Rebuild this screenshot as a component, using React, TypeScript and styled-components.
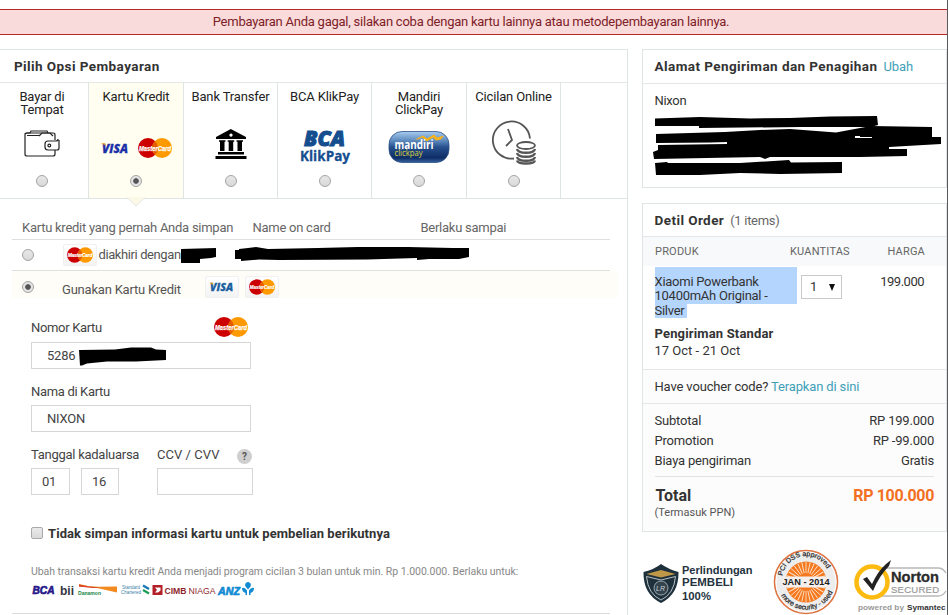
import React from "react";
import styled, { createGlobalStyle, css } from "styled-components";

const Global = createGlobalStyle`
  * { box-sizing: border-box; }
  html, body { margin: 0; padding: 0; background: #fff; overflow: hidden; }
  body { font-family: Roboto, "Liberation Sans", sans-serif; font-size: 13px; line-height: 16px; color: #333; }
  svg { display: block; flex: none; overflow: visible; }
`;

const Page = styled.div`
  width: 948px;
  height: 615px;
  overflow: hidden;
  padding-top: 9px;
  border-right: 1px solid #58595b;
  display: flex;
  flex-direction: column;
`;

const Alert = styled.div`
  height: 26px;
  flex: none;
  border: 1px solid #b52b2b;
  border-width: 1px 0;
  background: #fadbdb;
  color: #7d2127;
  text-align: center;
  line-height: 24px;
  padding-right: 5px;
  letter-spacing: -0.24px;
`;

const Columns = styled.div`
  display: flex;
  gap: 14px;
  margin-top: 14px;
  height: 566px;
`;

const Payment = styled.section`
  width: 628px;
  flex: none;
  border: 1px solid #dfe4e4;
  border-width: 1px 1px 0 0;
`;

const Side = styled.aside`
  width: 305px;
  flex: none;
`;

const PanelTitle = styled.h2<{ $h: number; $left: number }>`
  margin: 0;
  height: ${(p) => p.$h}px;
  padding-left: ${(p) => p.$left}px;
  border-bottom: 1px solid #e3e7e7;
  font-size: 13.5px;
  font-weight: 700;
  line-height: 33px;
  letter-spacing: 0.42px;
  display: flex;
  gap: 6px;
`;

const TitleNote = styled.span<{ $link?: boolean }>`
  font-size: 13px;
  font-weight: 400;
  letter-spacing: ${(p) => (p.$link ? -0.1 : -0.3)}px;
  color: ${(p) => (p.$link ? "#3f9fb8" : "#666")};
`;

const Tabs = styled.div`
  display: grid;
  grid-template-columns: 89px 95px 94px 94px 95px 94px 1fr;
  height: 116px;
  border-bottom: 1px solid #dfe5e5;
`;

const Tab = styled.div<{ $active?: boolean; $first?: boolean }>`
  position: relative;
  border-right: 1px solid #dfe5e5;
  background: ${(p) => (p.$active ? "#fffef0" : "#fff")};
  display: flex;
  flex-direction: column;
  align-items: center;
  ${(p) => (p.$first ? css`padding: 7px 4px 0 0;` : css`padding-top: 7px;`)}
`;

const TabName = styled.div`
  height: 32px;
  text-align: center;
  line-height: 13px;
  white-space: pre;
  color: #222;
  letter-spacing: -0.15px;
`;

const TabIcon = styled.div<{ $lift: number }>`
  height: 53px;
  padding-bottom: ${(p) => p.$lift * 2}px;
  display: flex;
  align-items: center;
  justify-content: center;
`;

const Notch = styled.svg`
  position: absolute;
  left: 38px;
  bottom: -9px;
`;

const Radio = styled.span<{ $on?: boolean }>`
  width: 12px;
  height: 12px;
  flex: none;
  border-radius: 50%;
  border: 1px solid #a4a4a4;
  background: ${(p) =>
    p.$on
      ? "radial-gradient(circle, #555 0 2.4px, #e4e4e4 3.2px)"
      : "linear-gradient(#e8e8e8, #d8d8d8)"};
`;

const Saved = styled.div`
  margin-left: 12px;
  width: 598px;
  color: #666;
`;

const SavedHead = styled.div`
  height: 41px;
  padding: 21px 0 0 10px;
  border-bottom: 1px solid #dfdfdf;
  display: grid;
  grid-template-columns: 230.5px 168px 1fr;
  letter-spacing: -0.26px;
`;

const SavedRow = styled.div`
  height: 31px;
  border-bottom: 1px solid #dfdfdf;
  display: flex;
  align-items: center;
  padding-left: 10px;
  color: #555;
  letter-spacing: -0.4px;
`;

const NewCardRow = styled.div`
  width: 606px;
  margin-left: 12px;
  height: 27px;
  background: #fffdf8;
  display: flex;
  align-items: flex-start;
  padding: 5px 0 0 10px;
  color: #555;
`;

const RadioSlot = styled.span`
  padding-top: 5px;
`;

const NewCardName = styled.span`
  margin: 6px 24px 0 28px;
  width: 118.5px;
  white-space: nowrap;
  letter-spacing: -0.21px;
`;

const CardChip = styled.span`
  width: 34px;
  height: 22px;
  flex: none;
  border: 1px solid #f0f0f0;
  border-radius: 2px;
  background: linear-gradient(#fff, #f3f3f3);
  display: flex;
  align-items: center;
  justify-content: center;
  & + & { margin-left: 6px; }
`;

const Form = styled.form`
  padding: 19px 0 0 31px;
  color: #444;
`;

const NumberTop = styled.div`
  width: 217px;
  height: 20px;
  margin-bottom: 5px;
  display: flex;
  justify-content: space-between;
  align-items: center;
`;

const FieldLabel = styled.div`
  letter-spacing: -0.33px;
  padding-top: 1px;
`;

const NameTop = styled.div`
  height: 36px;
  padding-top: 14px;
`;

const Field = styled.div<{ $w: number; $pad: number }>`
  width: ${(p) => p.$w}px;
  height: 27px;
  border: 1px solid #d6d6d6;
  padding-left: ${(p) => p.$pad}px;
  display: flex;
  align-items: center;
  letter-spacing: -0.2px;
`;

const ExpiryLabels = styled.div`
  display: flex;
  height: 16px;
  margin-top: 15px;
`;

const ExpiryLabel = styled.span<{ $w: number; $ls: number }>`
  width: ${(p) => p.$w}px;
  letter-spacing: ${(p) => p.$ls}px;
  white-space: nowrap;
`;

const Help = styled.span`
  width: 15px;
  height: 15px;
  margin-top: 2px;
  border-radius: 50%;
  background: #cfcfcf;
  color: #555;
  font-size: 10px;
  font-weight: 700;
  line-height: 15px;
  text-align: center;
`;

const ExpiryFields = styled.div`
  display: flex;
  margin-top: 5px;
`;

const Spacer = styled.span<{ $w: number }>`
  width: ${(p) => p.$w}px;
`;

const Remember = styled.label`
  display: flex;
  align-items: center;
  gap: 5px;
  height: 16px;
  margin-top: 31px;
  font-weight: 700;
  letter-spacing: 0.08px;
  color: #333;
`;

const Check = styled.span`
  width: 12px;
  height: 12px;
  margin-bottom: 2px;
  border: 1px solid #aaa;
  border-radius: 2px;
  background: linear-gradient(#eaeaea, #d9d9d9);
`;

const Installment = styled.p`
  margin: 22px 0 0;
  font-size: 10.5px;
  line-height: 16px;
  color: #888;
  letter-spacing: -0.04px;
  white-space: nowrap;
`;

const Logos = styled.div`
  margin-top: 2px;
`;

const BottomRule = styled.div`
  margin: 17px 0 0 12px;
  width: 598px;
  height: 1px;
  background: #dcdcdc;
`;

const AddressPanel = styled.section`
  height: 139px;
  border: 1px solid #dfe4e4;
`;

const AddressBody = styled.div`
  padding: 9px 0 0 11.5px;
  letter-spacing: -0.3px;
`;

const OrderPanel = styled.section`
  height: 329px;
  margin-top: 15px;
  border: 1px solid #dfe4e4;
`;

const OrderHead = styled.div`
  height: 29px;
  background: #f7f9fa;
  padding: 0 21px 0 12px;
  display: grid;
  grid-template-columns: 135px 1fr auto;
  align-items: center;
  font-size: 11px;
  letter-spacing: 0.2px;
  color: #666;
`;

const Item = styled.div`
  height: 103px;
  padding: 1px 22px 0 11.5px;
`;

const ItemTop = styled.div`
  display: flex;
  height: 51px;
`;

const Product = styled.div`
  width: 142px;
  line-height: 14.4px;
  letter-spacing: -0.26px;
`;

const Selected = styled.div<{ $last?: boolean }>`
  background: #b4d5fe;
  ${(p) =>
    p.$last
      ? css`width: 32px; height: 14px;`
      : css`height: 37px; padding-top: 8px; white-space: pre;`}
`;

const Quantity = styled.div`
  width: 41px;
  height: 24px;
  margin: 8px 0 0 4.5px;
  border: 1px solid #c9c9c9;
  padding: 0 5px 0 8px;
  display: flex;
  align-items: center;
  justify-content: space-between;
`;

const Price = styled.div`
  margin: 7px 0 0 auto;
  letter-spacing: -0.5px;
`;

const Shipping = styled.div`
  margin-top: 7px;
  line-height: 17px;
`;

const ShippingName = styled.div`
  font-weight: 700;
  letter-spacing: 0.16px;
`;

const Voucher = styled.div`
  height: 35px;
  border: 1px solid #e3e7e7;
  border-width: 1px 0;
  background: #fcfcfc;
  padding-left: 11.5px;
  line-height: 33px;
  letter-spacing: -0.15px;
`;

const Link = styled.a`
  color: #3f9fb8;
`;

const Summary = styled.div`
  background: #fcfcfc;
  height: 127px;
  padding: 7px 12px 0 11.5px;
`;

const SumRow = styled.div`
  display: flex;
  justify-content: space-between;
  line-height: 20px;
  letter-spacing: -0.2px;
`;

const TotalRow = styled.div`
  display: flex;
  justify-content: space-between;
  border-top: 1px solid #e0e4e4;
  margin-top: 5px;
  padding: 8px 0 0 1px;
  line-height: 22px;
  font-size: 16px;
  font-weight: 700;
`;

const Amount = styled.span`
  color: #f36f21;
  letter-spacing: -0.35px;
`;

const Tax = styled.div`
  font-size: 11px;
  line-height: 12px;
  color: #555;
`;

const Badges = styled.div`
  display: flex;
  height: 70px;
  margin-top: 14px;
`;

const SealSlot = styled.div<{ $top: number; $w: number }>`
  width: ${(p) => p.$w}px;
  flex: none;
  padding-top: ${(p) => p.$top}px;
`;

const Pair = styled.span`
  display: flex;
  align-items: center;
  gap: 9px;
`;

const MasterCard = ({ w = 34, h = 20 }: { w?: number; h?: number }) => (
  <svg width={w} height={h} viewBox="0 0 34 20">
    <circle cx="10" cy="10" r="10" fill="#c00" />
    <circle cx="24" cy="10" r="10" fill="#f90" />
    <path d="M17 2.9a10 10 0 0 1 0 14.2a10 10 0 0 1 0-14.2" fill="#e65c00" />
    <text x="1" y="13" fontFamily="Liberation Sans" fontStyle="italic" fontWeight="700" fontSize="7.5" textLength="32" lengthAdjust="spacingAndGlyphs" fill="#fff" stroke="#fff" strokeWidth=".25">MasterCard</text>
  </svg>
);

const Visa = ({ w = 28, color = "#1a30a8" }: { w?: number; color?: string }) => (
  <svg width={w} height="14" viewBox="0 0 28 14">
    <text x="1" y="11.5" fontFamily="Open Sans" fontStyle="italic" fontWeight="800" fontSize="12.5" textLength="26" lengthAdjust="spacingAndGlyphs" fill={color} stroke={color} strokeWidth=".3">VISA</text>
    <path d="M0.500 2.300h3.600l.8 2.600Q3 3 .5 2.800z" fill="#f5a21b" />
  </svg>
);

const CardPair = () => <Pair><Visa /><MasterCard /></Pair>;

const Wallet = () => (
  <svg width="36" height="28" viewBox="0 0 36 28" fill="none" stroke="#222" strokeWidth="1.2">
    <path d="M31 10V5q0-2-2-2H3Q1 3 1 5v19q0 2 2 2h26q2 0 2-2v-4" />
    <path d="M1 4q0-1 2-1h3l1-2h16l1 2M15 6l3-3h8l3 3M3 5.5h12" />
    <path d="M35 10v8q0 2-2 2H24q-3 0-3-3v-3q0-3 3-3h8q2 0 2-2" />
    <circle cx="25.3" cy="15.5" r="1.4" />
  </svg>
);

const Bank = () => (
  <svg width="32" height="30" viewBox="0 0 32 30">
    <path fill="#000" fillRule="evenodd" d="M15.8 0 31 8v2H1V8zM16 4.500a1.600 1.600 0 1 0 .01 0M4 11.200h6.500v1.500H9.500V22H5v-9.300H4zM12.700 11.200h6.500v1.500h-1V22h-4.500v-9.300h-1zM21.500 11.200H28v1.500h-1V22h-4.500v-9.300h-1zM3 23h26v2.500H3zM.5 27h31v3H.5z" />
  </svg>
);

const BcaKlikPay = () => (
  <svg width="52" height="36" viewBox="0 0 52 36" fill="#144e8f">
    <text x="5" y="16.500" fontFamily="Open Sans" fontStyle="italic" fontWeight="800" fontSize="21" textLength="41" lengthAdjust="spacingAndGlyphs" stroke="#144e8f" strokeWidth="1">BCA</text>
    <text x="1" y="32" fontFamily="Open Sans" fontWeight="700" fontSize="13.5" textLength="50" lengthAdjust="spacingAndGlyphs" stroke="#144e8f" strokeWidth=".3">KlikPay</text>
  </svg>
);

const MandiriClickPay = () => (
  <svg width="62" height="34" viewBox="0 0 62 34">
    <defs>
      <linearGradient id="pill" x1="0" y1="0" x2="0" y2="1">
        <stop offset="0" stopColor="#a9cdf0" />
        <stop offset=".3" stopColor="#5b88bd" />
        <stop offset=".5" stopColor="#27518d" />
        <stop offset=".85" stopColor="#0e2d66" />
        <stop offset="1" stopColor="#36639f" />
      </linearGradient>
    </defs>
    <rect x="1" y="1.500" width="60" height="31" rx="13" fill="url(#pill)" stroke="#2c5185" strokeWidth=".8" />
    <path d="M27 9.500l8-4 4 3 7-4 3 3 7-2-3 4-5 1-3-3-6 4-5-4-4 2z" fill="#f8b319" />
    <text x="6.500" y="18.500" fontFamily="Open Sans" fontWeight="700" fontSize="11.5" textLength="39" lengthAdjust="spacingAndGlyphs" fill="#fff">mandiri</text>
    <text x="6.500" y="26" fontFamily="Open Sans" fontSize="9" textLength="28" lengthAdjust="spacingAndGlyphs" fill="#d9cf3c">clickpay</text>
  </svg>
);

const ClockCoins = () => (
  <svg width="46" height="45" viewBox="0 0 46 45" fill="none" stroke="#555" strokeWidth="1.8">
    <path d="M23 38.500A18.600 18.600 0 1 1 39 18.500" />
    <path d="M17 9l4 11-6 6" />
    <ellipse cx="35" cy="25.500" rx="9" ry="3.500" />
    <path d="M26 29c1 5 17 5 18 0M26 33c1 5 17 5 18 0M26 37c1 5 17 5 18 0M26 40.500c1 4 17 4 18 0" strokeWidth="2.300" />
  </svg>
);

const AddressMarks = () => (
  <svg width="292" height="70" viewBox="655 109 292 70" fill="#000">
    <path d="M655 118.500 700 117 750 118.500 790 118 830 116.500 877 116 878 125 871 127 800 127 699 128 699 126 655 126z" />
    <path fillRule="evenodd" d="M656 134 725 132 760 130 790 129 836 132.500 860 128 871 126 932 127 932 137 941 137 941 144 889 147 889 149 907 149 907 156 860 157 770 157 765 159 760 157 654 159 653 152 658 150 658 145 727 144 727 142 710 142.500 656 143zM855 136l5 0 0 1 12 0 0 1-17 0z" />
    <path d="M655 163 667 162 668 163 740 163 789 160 791 162.500 842 162 842 173 780 174 740 173 700 175 656 175z" />
  </svg>
);

const BankLogos = () => (
  <svg width="226" height="14" viewBox="0 0 226 14" fontFamily="Liberation Sans" fontWeight="700">
    <text x="1.500" y="12" fontSize="11.500" fontStyle="italic" fill="#27188a" stroke="#27188a" strokeWidth=".7" textLength="22" lengthAdjust="spacingAndGlyphs">BCA</text>
    <text x="29" y="13" fontSize="13" fill="#33363c" textLength="14" lengthAdjust="spacingAndGlyphs">bii</text>
    <path d="M48 2l10 2.200 10 .6 18-.3V10.500L66 6 48 4.500z" fill="#f28a20" />
    <path d="M48 2.500l10 2 12 1-8 .5-14-1.500z" fill="#d9402a" />
    <text x="47" y="12.500" fontSize="5.500" fill="#168348" textLength="23" lengthAdjust="spacingAndGlyphs">Danamon</text>
    <g fontWeight="400" fontSize="5" fill="#3a7fa5">
      <text x="91" y="6.500" textLength="18" lengthAdjust="spacingAndGlyphs">Standard</text>
      <text x="90" y="12" textLength="20" lengthAdjust="spacingAndGlyphs">Chartered</text>
    </g>
    <path d="M112 3.500l6 3.500" fill="none" stroke="#1877b5" strokeWidth="2.300" />
    <path d="M112 8l6 3.500" fill="none" stroke="#1c9c54" strokeWidth="2.300" />
    <path d="M121.500 3h10v10h-10z" fill="#b3202a" />
    <path d="M124 5.500h5.500v3l-2.500 2h-3l2-2.500z" fill="#fff" />
    <text x="133.500" y="11.500" fontSize="9.500" fill="#8e1f2b" textLength="22" lengthAdjust="spacingAndGlyphs">CIMB</text>
    <text x="157.500" y="11.500" fontSize="9.500" fontWeight="400" fill="#8e1f2b" textLength="27" lengthAdjust="spacingAndGlyphs">NIAGA</text>
    <text x="187" y="13" fontSize="11" fontStyle="italic" fill="#118bd2" stroke="#118bd2" strokeWidth=".7" textLength="22" lengthAdjust="spacingAndGlyphs">ANZ</text>
    <path d="M217 0a3 3 0 0 1 2.500 4.500L217 7.500 214.500 4.500A3 3 0 0 1 217 0zM211 6q3-1 5 2.500V13h-1.500V11Q211 10 211 6zM223 6q-3-1-5 2.500V13h1.500V11Q223 10 223 6z" fill="#118bd2" />
  </svg>
);

const BuyerProtection = () => (
  <svg width="112" height="50" viewBox="0 0 112 50">
    <path d="M1.500 9Q13 6 19 1 26 6 36.500 9 37 31 19 40 1 31 1.500 9z" fill="#1d303c" />
    <path d="M4.500 11 19 7l14.500 4L19 14.500z" fill="#bf9847" />
    <path d="M4.500 13.500 19 17l14.500-3.500Q32 31 19 37 6 31 4.500 13.500z" fill="none" stroke="#c9d0d4" strokeWidth=".9" />
    <circle cx="19" cy="25" r="7" fill="#33444f" stroke="#9aa5ab" />
    <text x="14" y="27.500" fontFamily="Liberation Sans" fontStyle="italic" fontSize="7" fill="#ccd2d5">LR</text>
    <g fontFamily="Liberation Sans" fontWeight="700" fontSize="11" fill="#243340">
      <text x="40" y="11" textLength="70.500" lengthAdjust="spacingAndGlyphs">Perlindungan</text>
      <text x="40" y="23" textLength="51" lengthAdjust="spacingAndGlyphs">PEMBELI</text>
      <text x="40" y="37" textLength="29" lengthAdjust="spacingAndGlyphs">100%</text>
    </g>
  </svg>
);

const rays = Array.from({ length: 30 }, (_, i) => i * 12);

const PciSeal = () => (
  <svg width="66" height="66" viewBox="0 0 66 66">
    <defs>
      <path id="arcTop" d="M9.500 36A24 24 0 1 1 56.500 36" />
      <path id="arcBottom" d="M4.500 37A29 29 0 0 0 61.500 37" />
    </defs>
    <circle cx="33" cy="33" r="31.500" fill="#ededed" stroke="#df7440" strokeWidth="1.600" />
    <circle cx="33" cy="33" r="30" fill="none" stroke="#fff" />
    <circle cx="33" cy="33" r="20.500" fill="#f47920" />
    <g stroke="#ffe0c4" strokeWidth=".9">
      {rays.map((a) => <path key={a} d="M33 24V13" transform={`rotate(${a} 33 33)`} />)}
    </g>
    <path d="M10 27.500h46v11H10z" fill="#f4efec" />
    <g fontFamily="Liberation Sans" fill="#222">
      <text x="9.500" y="36" fontSize="9.500" fontWeight="700" textLength="47" lengthAdjust="spacingAndGlyphs">JAN - 2014</text>
      <text fontSize="7" stroke="#222" strokeWidth=".2"><textPath href="#arcTop" startOffset="9">PCI DSS approved</textPath></text>
      <text fontSize="7" stroke="#222" strokeWidth=".2"><textPath href="#arcBottom" startOffset="10">more security - used</textPath></text>
    </g>
  </svg>
);

const Norton = () => (
  <svg width="92" height="58" viewBox="0 0 92 58">
    <path d="M18 7H84q5 0 8 5M92 30q-3 5-8 5H18" fill="none" stroke="#b8b8b8" strokeWidth="1.300" />
    <circle cx="18" cy="21" r="15.500" fill="#fff" stroke="#fdbb11" strokeWidth="4.500" />
    <path d="M9 18l4-2 5 7Q24 10 32 3l5-4-2 6Q25 15 19 30z" fill="#222" />
    <g fontFamily="Liberation Sans">
      <text x="37" y="20.500" fontSize="14" fontWeight="700" fill="#2b2b2b" stroke="#2b2b2b" strokeWidth=".3" textLength="48" lengthAdjust="spacingAndGlyphs">Norton</text>
      <text x="37" y="32" fontSize="9.500" fill="#999" stroke="#999" strokeWidth=".2" textLength="48" lengthAdjust="spacing">SECURED</text>
      <text x="4" y="48.500" fontSize="8" fontWeight="700" fill="#999" textLength="46" lengthAdjust="spacingAndGlyphs">powered by</text>
      <text x="53" y="48.500" fontSize="8" fontWeight="700" fill="#333" textLength="38.500" lengthAdjust="spacingAndGlyphs">Symantec</text>
    </g>
  </svg>
);

const options = [
  { name: "Bayar di\nTempat", icon: <Wallet />, lift: 5 },
  { name: "Kartu Kredit", icon: <CardPair />, lift: 1, active: true },
  { name: "Bank Transfer", icon: <Bank />, lift: 4.5 },
  { name: "BCA KlikPay", icon: <BcaKlikPay />, lift: 1.5 },
  { name: "Mandiri\nClickPay", icon: <MandiriClickPay />, lift: 2 },
  { name: "Cicilan Online", icon: <ClockCoins />, lift: 6.5 },
];

const sums = [
  ["Subtotal", "RP 199.000"],
  ["Promotion", "RP -99.000"],
  ["Biaya pengiriman", "Gratis"],
];

export default function App() {
  return (
    <>
      <Global />
      <Page>
        <Alert>Pembayaran Anda gagal, silakan coba dengan kartu lainnya atau metodepembayaran lainnya.</Alert>
        <Columns>
          <Payment>
            <PanelTitle $h={33} $left={14}>Pilih Opsi Pembayaran</PanelTitle>
            <Tabs>
              {options.map((o, i) => (
                <Tab key={o.name} $active={o.active} $first={i === 0}>
                  <TabName>{o.name}</TabName>
                  <TabIcon $lift={o.lift}>{o.icon}</TabIcon>
                  <Radio $on={o.active} />
                  {o.active && (
                    <Notch width="18" height="10" viewBox="0 0 18 10">
                      <path d="M0 0h18L9 9z" fill="#fbf9e6" />
                      <path d="M0 0.500 9 9l9-8.500" fill="none" stroke="#e3e7e2" />
                    </Notch>
                  )}
                </Tab>
              ))}
            </Tabs>
            <Saved>
              <SavedHead>
                <span>Kartu kredit yang pernah Anda simpan</span>
                <span>Name on card</span>
                <span>Berlaku sampai</span>
              </SavedHead>
              <SavedRow>
                <Radio />
                <Spacer $w={29} />
                <CardChip><MasterCard w={26} h={16} /></CardChip>
                <Spacer $w={1.5} />
                <span>diakhiri dengan</span>
                <svg width="290" height="18" viewBox="0 0 290 18">
                  <path d="M0 3l35-1v9l-5 1-11 1v4H0zM54 4h4V3l9-1 8-1 12 2 50-1 40-1h50l45 1h16v9l-10 2H248l-12 1v-2l-50 1.500-88 .5-20-.5-18 1.500v-2h-6z" fill="#000" />
                </svg>
              </SavedRow>
            </Saved>
            <NewCardRow>
              <RadioSlot><Radio as="div" $on /></RadioSlot>
              <NewCardName>Gunakan Kartu Kredit</NewCardName>
              <CardChip><Visa w={25} color="#1b5f9f" /></CardChip>
              <CardChip><MasterCard w={26} h={16} /></CardChip>
            </NewCardRow>
            <Form>
              <NumberTop>
                <FieldLabel>Nomor Kartu</FieldLabel>
                <MasterCard />
              </NumberTop>
              <Field $w={220} $pad={15}>
                5286
                <Spacer $w={4} />
                <svg width="90" height="18" viewBox="0 0 90 18"><path d="M0 3h1l35-.5 16-2h20l5 2 10 .5v10l-30 1.500H28l-20 2-5 2H1z" fill="#000" /></svg>
              </Field>
              <NameTop><FieldLabel>Nama di Kartu</FieldLabel></NameTop>
              <Field $w={220} $pad={15}>NIXON</Field>
              <ExpiryLabels>
                <ExpiryLabel $w={126} $ls={-0.27}>Tanggal kadaluarsa</ExpiryLabel>
                <ExpiryLabel $w={80} $ls={0.05}>CCV / CVV</ExpiryLabel>
                <Help>?</Help>
              </ExpiryLabels>
              <ExpiryFields>
                <Field $w={39} $pad={10}>01</Field>
                <Spacer $w={11} />
                <Field $w={38} $pad={10}>16</Field>
                <Spacer $w={38} />
                <Field $w={96} $pad={10} />
              </ExpiryFields>
              <Remember><Check />Tidak simpan informasi kartu untuk pembelian berikutnya</Remember>
              <Installment>Ubah transaksi kartu kredit Anda menjadi program cicilan 3 bulan untuk min. Rp 1.000.000. Berlaku untuk:</Installment>
              <Logos><BankLogos /></Logos>
            </Form>
            <BottomRule />
          </Payment>
          <Side>
            <AddressPanel>
              <PanelTitle $h={34} $left={11.5}>
                Alamat Pengiriman dan Penagihan <TitleNote $link>Ubah</TitleNote>
              </PanelTitle>
              <AddressBody>Nixon<AddressMarks /></AddressBody>
            </AddressPanel>
            <OrderPanel>
              <PanelTitle $h={33} $left={11.5}>Detil Order <TitleNote>(1 items)</TitleNote></PanelTitle>
              <OrderHead><span>PRODUK</span><span>KUANTITAS</span><span>HARGA</span></OrderHead>
              <Item>
                <ItemTop>
                  <Product>
                    <Selected>{"Xiaomi Powerbank\n10400mAh Original -"}</Selected>
                    <Selected $last>Silver</Selected>
                  </Product>
                  <Quantity>
                    1
                    <svg width="8" height="8" viewBox="0 0 8 8"><path d="M1 1h6L4 8z" fill="#111" /></svg>
                  </Quantity>
                  <Price>199.000</Price>
                </ItemTop>
                <Shipping>
                  <ShippingName>Pengiriman Standar</ShippingName>
                  17 Oct - 21 Oct
                </Shipping>
              </Item>
              <Voucher>Have voucher code? <Link>Terapkan di sini</Link></Voucher>
              <Summary>
                {sums.map(([k, v]) => <SumRow key={k}><span>{k}</span><span>{v}</span></SumRow>)}
                <TotalRow>Total<Amount>RP 100.000</Amount></TotalRow>
                <Tax>(Termasuk PPN)</Tax>
              </Summary>
            </OrderPanel>
            <Badges>
              <SealSlot $top={17} $w={131}><BuyerProtection /></SealSlot>
              <SealSlot $top={3} $w={81}><PciSeal /></SealSlot>
              <SealSlot $top={15} $w={92}><Norton /></SealSlot>
            </Badges>
          </Side>
        </Columns>
      </Page>
    </>
  );
}
